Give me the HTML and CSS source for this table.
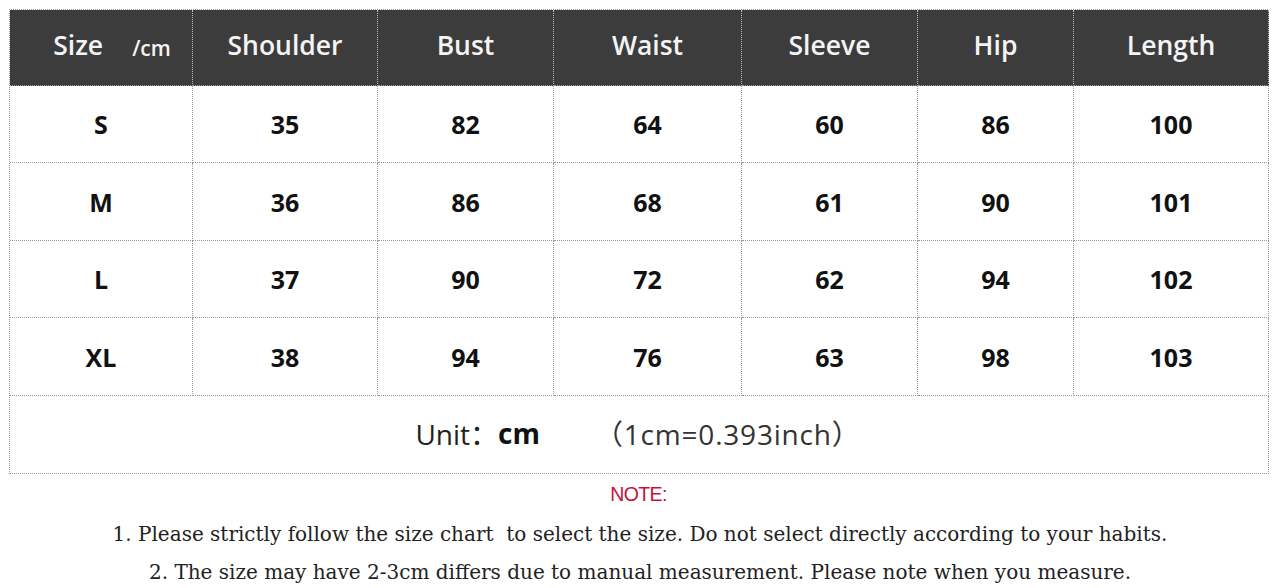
FILE: index.html
```html
<!DOCTYPE html>
<html>
<head>
<meta charset="utf-8">
<link rel="stylesheet" href="styles.css">
</head>
<body>
<div class="page">
  <div class="chart">
    <div class="cell head first"><span class="size">Size</span><span class="unit">/cm</span></div>
    <div class="cell head">Shoulder</div>
    <div class="cell head">Bust</div>
    <div class="cell head">Waist</div>
    <div class="cell head">Sleeve</div>
    <div class="cell head">Hip</div>
    <div class="cell head">Length</div>

    <div class="cell">S</div><div class="cell">35</div><div class="cell">82</div><div class="cell">64</div><div class="cell">60</div><div class="cell">86</div><div class="cell">100</div>
    <div class="cell">M</div><div class="cell">36</div><div class="cell">86</div><div class="cell">68</div><div class="cell">61</div><div class="cell">90</div><div class="cell">101</div>
    <div class="cell">L</div><div class="cell">37</div><div class="cell">90</div><div class="cell">72</div><div class="cell">62</div><div class="cell">94</div><div class="cell">102</div>
    <div class="cell">XL</div><div class="cell">38</div><div class="cell">94</div><div class="cell">76</div><div class="cell">63</div><div class="cell">98</div><div class="cell">103</div>

    <div class="cell unit-row"><span class="unit-label">Unit：</span><span class="unit-cm">cm</span><span class="unit-conv">（1cm=0.393inch）</span></div>
  </div>
  <div class="note">NOTE:</div>
  <p class="line">1. Please strictly follow the size chart&nbsp; to select the size. Do not select directly according to your habits.</p>
  <p class="line">2. The size may have 2-3cm differs due to manual measurement. Please note when you measure.</p>
</div>
</body>
</html>
```

FILE: styles.css
```css
html, body {
  margin: 0;
  padding: 0;
  background: #ffffff;
}

.page {
  width: 1280px;
  height: 588px;
  overflow: hidden;
  padding-top: 9px;
  box-sizing: border-box;
}

.chart {
  margin-left: 9px;
  width: 1259px;
  display: grid;
  grid-template-columns: 183px 185px 176px 188px 176px 156px 195px;
  grid-template-rows: 76px 77px 78px 77px 78px 78px;
  border-top: 1px dotted #9a9a9a;
  border-left: 1px dotted #9a9a9a;
  box-sizing: border-box;
  font-family: "Open Sans", "Liberation Sans", "Noto Sans CJK SC", sans-serif;
}

.cell {
  display: flex;
  align-items: center;
  justify-content: center;
  border-right: 1px dotted #9a9a9a;
  border-bottom: 1px dotted #9a9a9a;
  font-size: 25px;
  font-weight: 700;
  color: #111111;
}

.cell.head {
  background: #3c3c3c;
  color: #f4f4f4;
  font-weight: 600;
  font-size: 26.5px;
  padding-bottom: 5px;
  box-sizing: border-box;
  border-right-color: #bdbdbd;
  border-bottom-color: #9a9a9a;
}

.cell.head.first {
  padding-left: 22px;
}

.size {
  margin-right: 29px;
}

.unit {
  font-size: 21px;
  padding-top: 5px;
}

.unit-row {
  grid-column: 1 / -1;
  font-weight: 400;
  color: #222222;
  font-size: 28px;
  padding-right: 14px;
  padding-bottom: 4px;
  box-sizing: border-box;
}

.unit-cm {
  font-weight: 700;
  font-size: 28px;
  color: #111111;
  margin-right: 55px;
}

.unit-conv {
  color: #333333;
  letter-spacing: 0.8px;
  margin-right: -12px;
}

.note {
  text-align: center;
  color: #c8103a;
  font-family: "Liberation Sans", sans-serif;
  font-size: 19.5px;
  margin-top: 9px;
  padding-right: 3px;
  letter-spacing: -0.6px;
}

.line {
  margin: 0;
  text-align: center;
  font-family: "DejaVu Serif", serif;
  font-size: 20px;
  color: #222222;
  line-height: 38px;
}

.note + .line {
  margin-top: 9px;
}
```
